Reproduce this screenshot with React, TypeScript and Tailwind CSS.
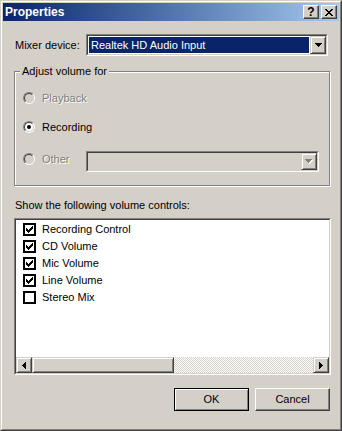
import React from 'react';

const sunken =
  'border border-t-[#808080] border-l-[#808080] border-r-white border-b-white';
const sunkenInner =
  'border border-t-[#404040] border-l-[#404040] border-r-[#d4d0c8] border-b-[#d4d0c8]';
const raised =
  'border border-t-white border-l-white border-r-[#404040] border-b-[#404040] shadow-[inset_-1px_-1px_0_#808080]';
const raisedSoft =
  'border border-t-[#d4d0c8] border-l-[#d4d0c8] border-r-[#404040] border-b-[#404040] shadow-[inset_1px_1px_0_#fff,inset_-1px_-1px_0_#808080]';
const disabledText = 'text-[#808080] [text-shadow:1px_1px_0_#fff]';

const Pixels = ({ w, h, rects, color = '#000' }: { w: number; h: number; rects: number[][]; color?: string }) => (
  <svg width={w} height={h} viewBox={`0 0 ${w} ${h}`} shapeRendering="crispEdges">
    {rects.map(([x, y, rw, rh], i) => (
      <rect key={i} x={x} y={y} width={rw} height={rh} fill={color} />
    ))}
  </svg>
);

const downArrow = [[0, 0, 7, 1], [1, 1, 5, 1], [2, 2, 3, 1], [3, 3, 1, 1]];
const leftArrow = [[3, 0, 1, 7], [2, 1, 1, 5], [1, 2, 1, 3], [0, 3, 1, 1]];
const rightArrow = [[0, 0, 1, 7], [1, 1, 1, 5], [2, 2, 1, 3], [3, 3, 1, 1]];
const checkMark = [
  [6, 0, 1, 1], [5, 1, 2, 1], [0, 2, 1, 1], [4, 2, 3, 1],
  [0, 3, 2, 1], [3, 3, 3, 1], [0, 4, 5, 1], [1, 5, 3, 1], [2, 6, 1, 1],
];
const closeGlyph = [
  [0, 0, 2, 1], [6, 0, 2, 1], [1, 1, 2, 1], [5, 1, 2, 1], [2, 2, 4, 1],
  [3, 3, 2, 1], [2, 4, 4, 1], [1, 5, 2, 1], [5, 5, 2, 1], [0, 6, 2, 1], [6, 6, 2, 1],
];

const DropButton = ({ disabled }: { disabled?: boolean }) => (
  <div className={`w-[16px] h-full flex items-center justify-center bg-[#d4d0c8] ${raisedSoft}`}>
    {disabled ? (
      <div className="relative w-[8px] h-[5px]">
        <div className="absolute left-px top-px">
          <Pixels w={7} h={4} rects={downArrow} color="#fff" />
        </div>
        <div className="absolute left-0 top-0">
          <Pixels w={7} h={4} rects={downArrow} color="#808080" />
        </div>
      </div>
    ) : (
      <Pixels w={7} h={4} rects={downArrow} />
    )}
  </div>
);

const Radio = ({ label, checked, disabled }: { label: string; checked?: boolean; disabled?: boolean }) => (
  <div className="flex items-center h-[14px]">
    <div className="w-[12px] h-[12px] rounded-full border border-t-[#808080] border-l-[#808080] border-r-white border-b-white">
      <div
        className={`w-full h-full rounded-full border border-t-[#404040] border-l-[#404040] border-r-[#d4d0c8] border-b-[#d4d0c8] flex items-center justify-center ${
          disabled ? 'bg-[#d4d0c8]' : 'bg-white'
        }`}
      >
        {checked && <div className="w-[4px] h-[4px] rounded-full bg-black" />}
      </div>
    </div>
    <span className={`ml-[7px] ${disabled ? disabledText : 'text-black'}`}>{label}</span>
  </div>
);

const controls = [
  { name: 'Recording Control', on: true },
  { name: 'CD Volume', on: true },
  { name: 'Mic Volume', on: true },
  { name: 'Line Volume', on: true },
  { name: 'Stereo Mix', on: false },
];

export default function App() {
  return (
    <div className="w-[342px] h-[431px] bg-[#d4d0c8] text-[11px] leading-[13px] text-black font-['Liberation_Sans',Arial,sans-serif] border border-t-[#d4d0c8] border-l-[#d4d0c8] border-r-[#404040] border-b-[#404040]">
      <div className="h-full p-px flex flex-col border border-t-white border-l-white border-r-[#808080] border-b-[#808080]">
        {/* title bar */}
        <div className="h-[18px] flex items-center bg-gradient-to-r from-[#0a246a] to-[#a6caf0] pl-[2px] pr-[2px]">
          <span className="font-bold text-white text-[12px]">Properties</span>
          <div className="ml-auto flex gap-[2px]">
            <div className={`w-[16px] h-[14px] bg-[#d4d0c8] flex items-center justify-center ${raised}`}>
              <span className="font-bold text-[12px] leading-[12px] text-black">?</span>
            </div>
            <div className={`w-[16px] h-[14px] bg-[#d4d0c8] flex items-center justify-center ${raised}`}>
              <Pixels w={8} h={7} rects={closeGlyph} />
            </div>
          </div>
        </div>

        {/* body */}
        <div className="flex flex-col pl-[11px]">
          <div className="mt-[13px] h-[22px] flex items-center">
            <div className="w-[72px] pl-px">Mixer device:</div>
            <div className={`w-[242px] h-[22px] ${sunken}`}>
              <div className={`h-full flex bg-white ${sunkenInner}`}>
                <div className="flex-1 p-px">
                  <div className="h-full bg-[#0a246a] text-white pl-[2px] leading-[16px]">Realtek HD Audio Input</div>
                </div>
                <DropButton />
              </div>
            </div>
          </div>

          {/* group box */}
          <div className="relative mt-[15px] w-[316px] h-[115px] border border-[#808080] shadow-[inset_1px_1px_0_#fff,1px_1px_0_#fff] pl-[8px]">
            <div className="absolute left-[5px] top-[-7px] bg-[#d4d0c8] px-[2px]">Adjust volume for</div>
            <div className="mt-[19px]">
              <Radio label="Playback" disabled />
            </div>
            <div className="mt-[15px]">
              <Radio label="Recording" checked />
            </div>
            <div className="mt-[17px] flex items-start">
              <div className="w-[63px] pt-px">
                <Radio label="Other" disabled />
              </div>
              <div className={`w-[233px] h-[21px] ${sunken}`}>
                <div className={`h-full flex justify-end bg-[#d4d0c8] ${sunkenInner}`}>
                  <DropButton disabled />
                </div>
              </div>
            </div>
          </div>

          <div className="mt-[13px] pl-px">Show the following volume controls:</div>

          {/* list view */}
          <div className={`mt-[6px] w-[317px] h-[157px] ${sunken}`}>
            <div className={`h-full flex flex-col bg-white ${sunkenInner}`}>
              <div className="flex-1 pt-px">
                {controls.map(c => (
                  <div key={c.name} className="h-[17px] flex items-center pl-[7px]">
                    <div className="w-[13px] h-[13px] border-2 border-black bg-white flex items-center justify-center">
                      {c.on && <Pixels w={7} h={7} rects={checkMark} />}
                    </div>
                    <span className="ml-[6px]">{c.name}</span>
                  </div>
                ))}
              </div>
              <div className="h-[16px] flex">
                <div className={`w-[16px] h-full bg-[#d4d0c8] flex items-center justify-center ${raisedSoft}`}>
                  <Pixels w={4} h={7} rects={leftArrow} />
                </div>
                <div className={`w-[142px] h-full bg-[#d4d0c8] ${raisedSoft}`} />
                <div className="flex-1 h-full bg-[repeating-conic-gradient(#d4d0c8_0%_25%,#ffffff_0%_50%)] bg-[length:2px_2px]" />
                <div className={`w-[16px] h-full bg-[#d4d0c8] flex items-center justify-center ${raisedSoft}`}>
                  <Pixels w={4} h={7} rects={rightArrow} />
                </div>
              </div>
            </div>
          </div>

          {/* buttons */}
          <div className="mt-[13px] w-[316px] flex justify-end gap-[6px]">
            <button className="w-[75px] h-[23px] bg-[#d4d0c8] border border-black shadow-[inset_1px_1px_0_#fff,inset_-1px_-1px_0_#808080] text-black">
              OK
            </button>
            <button className={`w-[75px] h-[23px] bg-[#d4d0c8] text-black ${raised}`}>Cancel</button>
          </div>
        </div>
      </div>
    </div>
  );
}
